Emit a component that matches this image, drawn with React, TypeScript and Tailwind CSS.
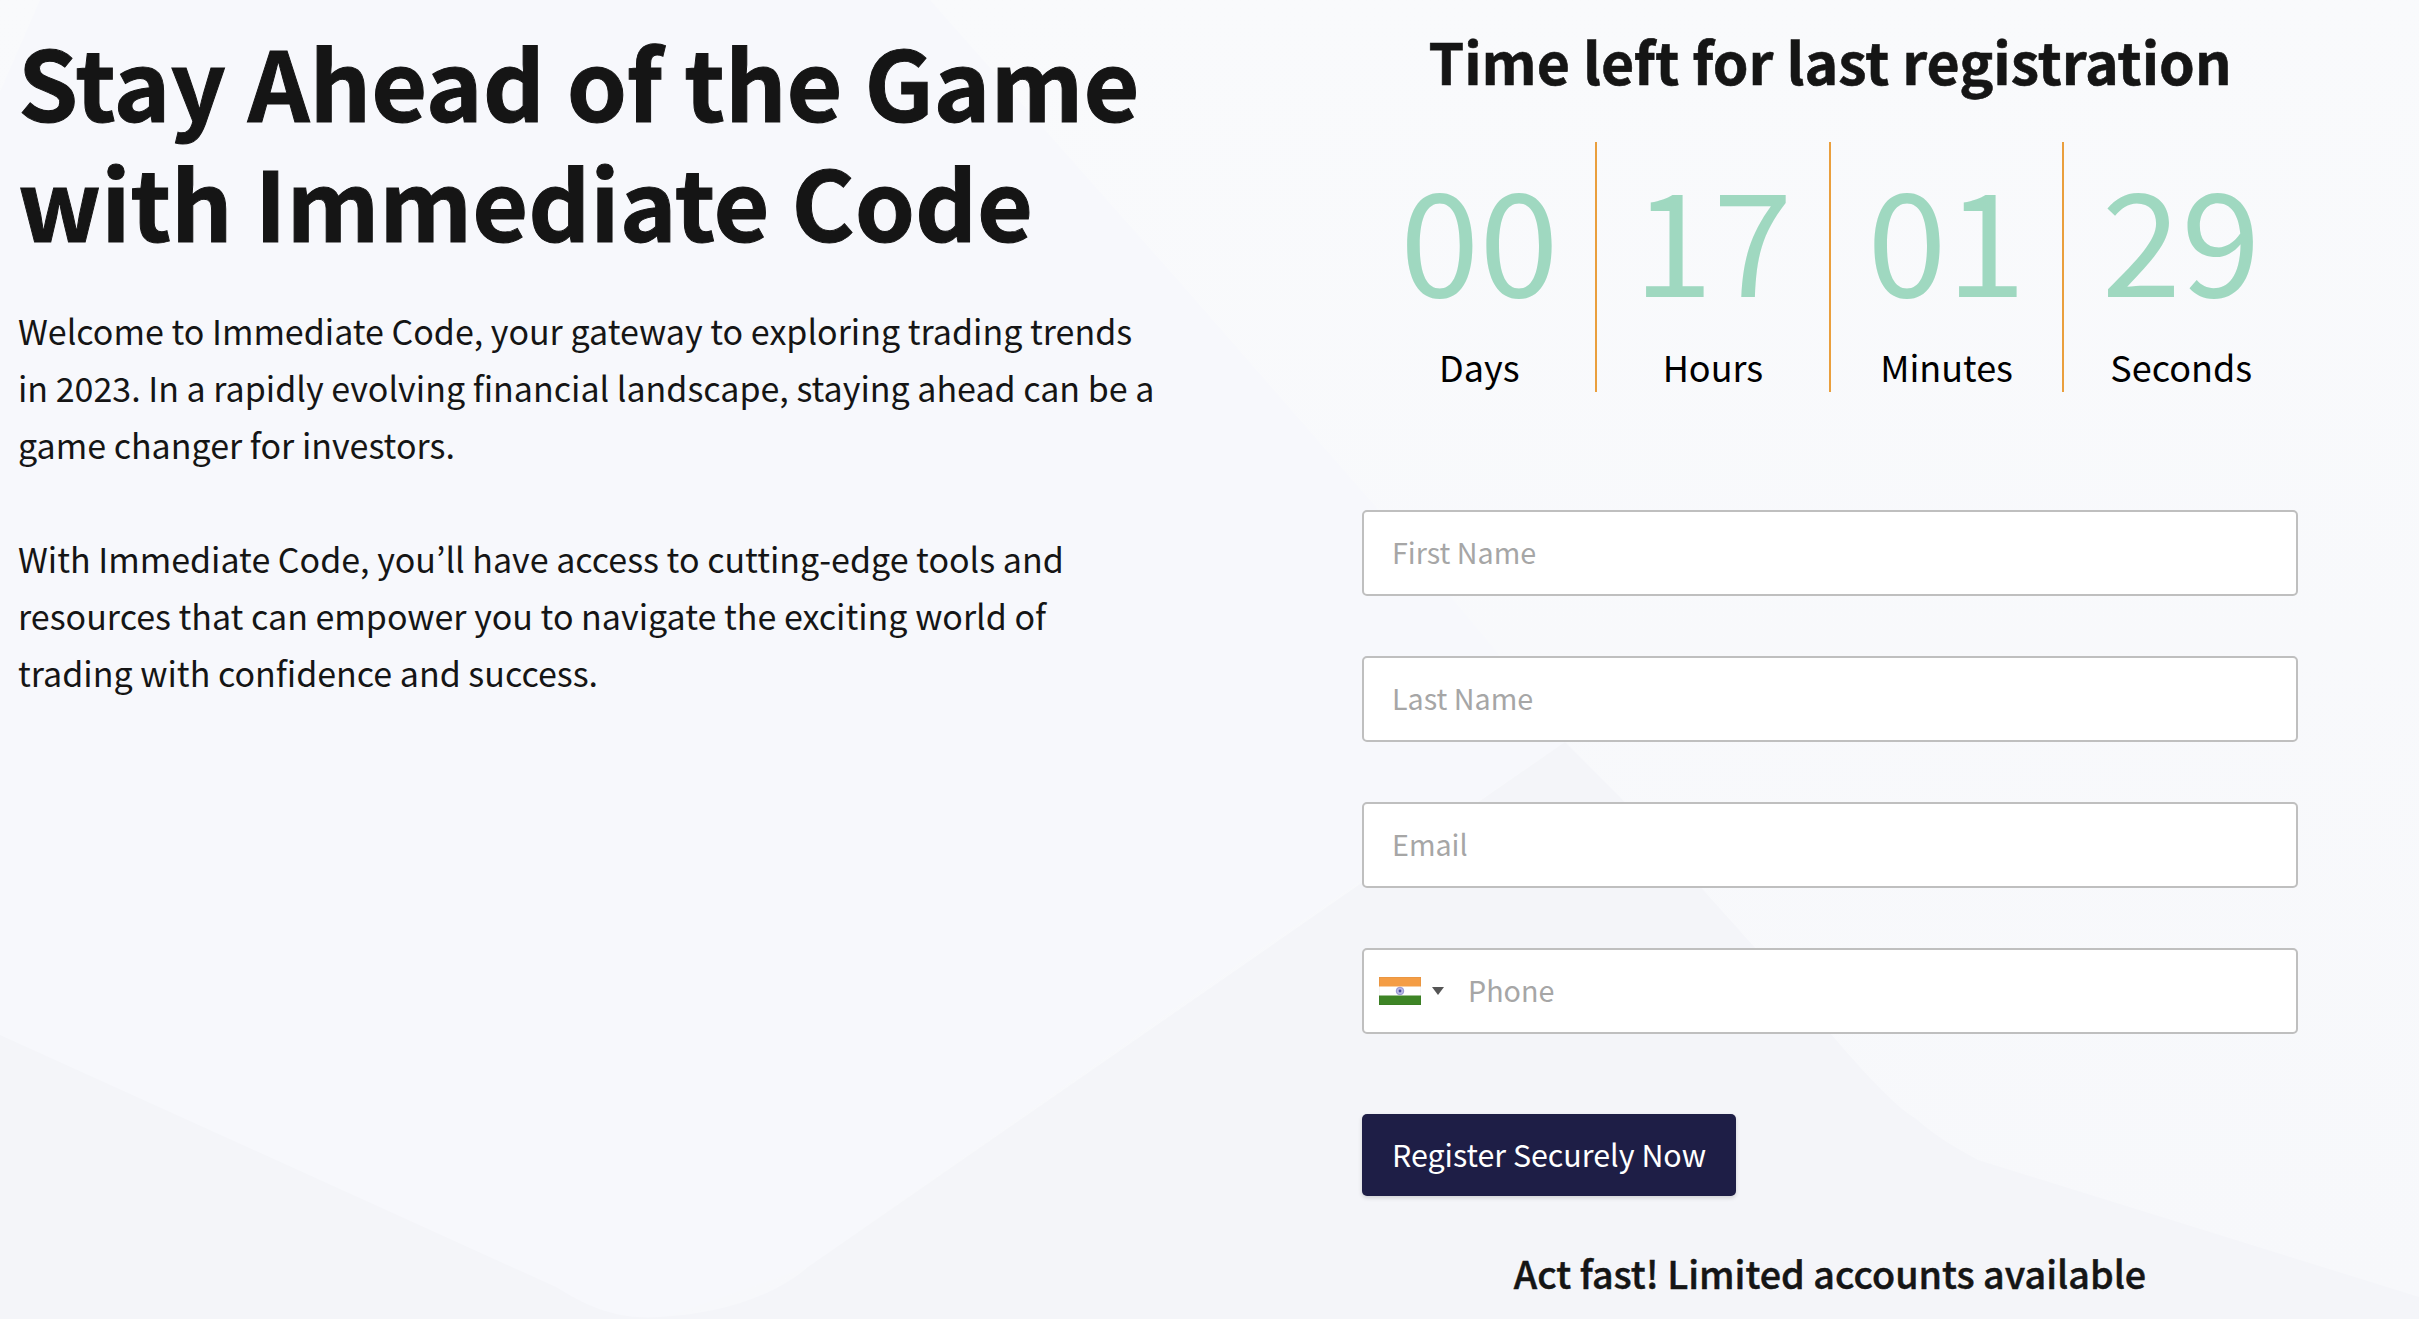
const countdown = [
  { value: '00', label: 'Days' },
  { value: '17', label: 'Hours' },
  { value: '01', label: 'Minutes' },
  { value: '29', label: 'Seconds' },
];

const inputClass =
  'h-[86px] w-full rounded-[5px] border-2 border-[#bfbfbf] bg-white px-[28px] pb-[3px] text-[28.7px] text-[#333] outline-none placeholder:text-[#a6a6a6]';

const IndiaFlag = () => (
  <svg width="42" height="28" viewBox="0 0 42 28" className="shrink-0">
    <rect width="42" height="28" fill="#fff" />
    <rect width="42" height="9.5" fill="#f49d45" />
    <rect y="18.5" width="42" height="9.5" fill="#3e8526" />
    <circle cx="21" cy="14" r="3.8" fill="#b9b9e4" stroke="#7a7ac4" strokeWidth="0.7" />
    <circle cx="21" cy="14" r="1.4" fill="#4a4aa0" />
    <rect x="0.25" y="0.25" width="41.5" height="27.5" fill="none" stroke="#000" strokeOpacity="0.08" strokeWidth="0.5" />
  </svg>
);

export default function App() {
  return (
    <div
      className="relative h-[1319px] w-full overflow-hidden bg-gradient-to-b from-[#f9fafc] to-[#f7f8fb] text-[#151515]"
      style={{ fontFamily: '"Noto Sans CJK JP", "Noto Sans", sans-serif' }}
    >
      {/* faint background shapes */}
      <svg className="absolute inset-0" width="2419" height="1319" viewBox="0 0 2419 1319">
        <path d="M40 0 L930 0 L1183 286 L1374 505 L1495 650 L1565 742 L1200 990 L808 1267 L660 1319 L0 1319 L0 92 Z" fill="#f7f8fc" />
        <path
          d="M0 1035 L556 1287 C600 1315 630 1319 660 1317 C710 1315 770 1300 808 1267 L1565 742 L1620 797 L1756 949 L1830 1033 C1870 1080 1900 1110 1915 1118 C1940 1140 1960 1150 1978 1160 L2419 1297 L2419 1319 L0 1319 Z"
          fill="#f4f5f9"
        />
      </svg>

      <div className="relative flex h-full">
        {/* Left copy */}
        <div className="w-[1362px] shrink-0 pl-[18px]">
          <h1 className="mt-[20px] text-[96.4px] font-bold leading-[120px] [-webkit-text-stroke:1px_#151515]">
            Stay Ahead of the Game
            <br />
            with Immediate Code
          </h1>
          <p className="mt-[42px] text-[34px] leading-[57px]">
            Welcome to Immediate Code, your gateway to exploring trading trends
            <br />
            in 2023. In a rapidly evolving financial landscape, staying ahead can be a
            <br />
            game changer for investors.
          </p>
          <p className="mt-[57px] text-[34px] leading-[57px]">
            With Immediate Code, you’ll have access to cutting-edge tools and
            <br />
            resources that can empower you to navigate the exciting world of
            <br />
            trading with confidence and success.
          </p>
        </div>

        {/* Registration */}
        <div className="w-[936px] shrink-0">
          <h2 className="mt-[24px] text-center text-[57.2px] font-bold leading-[72px] [-webkit-text-stroke:0.6px_#151515]">
            Time left for last registration
          </h2>

          <div className="ml-[1.5px] mt-[46px] grid h-[250px] grid-cols-4">
            {countdown.map((item, i) => (
              <div
                key={item.label}
                className={`flex flex-col items-center ${i < 3 ? 'border-r-2 border-[#ea9f3d]' : ''}`}
              >
                <span className="mt-[8px] text-[143px] font-normal leading-[170px] text-[#9fd8c0]">{item.value}</span>
                <span className="mt-[22px] text-[36px] leading-[48px] text-black">{item.label}</span>
              </div>
            ))}
          </div>

          <form className="mt-[118px] flex flex-col gap-[60px]">
            <input className={inputClass} placeholder="First Name" />
            <input className={inputClass} placeholder="Last Name" />
            <input className={inputClass} placeholder="Email" />
            <div className="flex h-[86px] items-center rounded-[5px] border-2 border-[#bfbfbf] bg-white pl-[15px]">
              <IndiaFlag />
              <span className="ml-[11px] h-0 w-0 border-x-[6px] border-t-[8px] border-x-transparent border-t-[#555]" />
              <input
                className="ml-[24px] h-full flex-1 bg-transparent pb-[3px] text-[28.7px] text-[#333] outline-none placeholder:text-[#a6a6a6]"
                placeholder="Phone"
              />
            </div>
          </form>

          <button className="mt-[80px] flex h-[82px] w-[374px] items-center justify-center rounded-[5px] bg-[#1e1e46] text-[30.4px] text-white shadow-[0_2px_4px_rgba(0,0,0,0.15)]">
            Register Securely Now
          </button>

          <p className="mt-[49px] text-center text-[37.7px] font-medium leading-[56px] [-webkit-text-stroke:0.5px_#151515]">
            Act fast! Limited accounts available
          </p>
        </div>
      </div>
    </div>
  );
}
